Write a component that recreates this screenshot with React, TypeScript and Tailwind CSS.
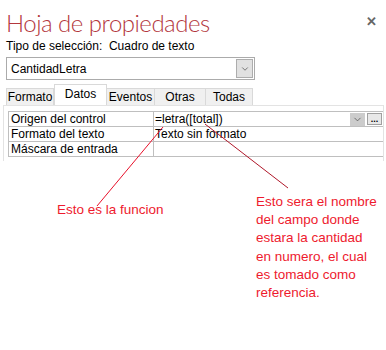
import { ChevronDown } from "lucide-react";

const ui = "font-['Liberation_Sans','Arial',sans-serif]";
const hand = "font-['Liberation_Sans','Arial',sans-serif]";

const tabs = [
  { name: "Formato", w: "w-[48px]" },
  { name: "Datos", w: "w-[53px]" },
  { name: "Eventos", w: "w-[48px]" },
  { name: "Otras", w: "w-[51px]" },
  { name: "Todas", w: "w-[47px]" },
];

function Tabs() {
  return (
    <div className="flex h-[21px] items-end pl-[6px]">
      {tabs.map((t) =>
        t.name === "Datos" ? (
          <div
            key={t.name}
            className={`flex h-[21px] ${t.w} items-start justify-center border-x border-t border-[#d9d9d9] bg-white pt-[2px] text-[12px] leading-[14px]`}
          >
            {t.name}
          </div>
        ) : (
          <div
            key={t.name}
            className={`flex h-[17px] ${t.w} items-center justify-center border-t border-r border-[#d9d9d9] bg-[#f0f0f0] text-[12px] leading-[14px] first:border-l`}
          >
            {t.name}
          </div>
        ),
      )}
    </div>
  );
}

function Row({ label, value, first }: { label: string; value?: string; first?: boolean }) {
  return (
    <div className="flex h-[15px] border-b border-[#bfbfbf]">
      <div className="w-[145px] shrink-0 border-r border-[#bfbfbf] pl-[2px] text-[12px] leading-[14px]">
        {label}
      </div>
      <div className="flex min-w-0 flex-1 items-center pl-[1px] text-[12px] leading-[14px]">
        <span className="flex-1">{value}</span>
        {first && (
          <div className="flex gap-[2px] pr-[1px]">
            <div className="flex h-[13px] w-[15px] items-center justify-center bg-[#cccccc]">
              <ChevronDown className="size-[11px] text-[#444]" strokeWidth={1.5} />
            </div>
            <div className="flex h-[12px] w-[15px] items-center justify-center border border-[#a0a0a0] bg-[#e8e8e8] text-[9px] font-bold leading-[6px]">
              ...
            </div>
          </div>
        )}
      </div>
    </div>
  );
}

export default function App() {
  return (
    <div className={`relative h-[350px] w-[386px] overflow-hidden bg-white text-black ${ui}`}>
      <div className="flex items-start justify-between pl-[6px] pr-[9px] pt-[9px]">
        <h1 className="font-['Lato',sans-serif] text-[24px] font-light leading-[28px] tracking-[-0.5px] text-[#b3373d]">
          Hoja de propiedades
        </h1>
        <span className="mt-[6px] text-[13px] font-bold leading-[14px] text-[#666]">✕</span>
      </div>
      <div className="mt-[1px] pl-[6px] text-[12px] leading-[16px]">
        Tipo de selección:&nbsp; Cuadro de texto
      </div>

      <div className="ml-[6px] mt-[3px] flex h-[23px] w-[249px] items-center border border-[#ababab] bg-white">
        <span className="flex-1 pl-[4px] text-[12px] leading-[16px]">CantidadLetra</span>
        <div className="mr-[1px] flex h-[19px] w-[17px] items-center justify-center border border-[#adadad] bg-[#e1e1e1]">
          <ChevronDown className="size-[10px] text-[#333]" strokeWidth={1.5} />
        </div>
      </div>

      <div className="mt-[4px]">
        <Tabs />
      </div>

      <div className="ml-[3px] mr-[2px] h-[56px] border-x border-t border-[#e3e3e3] pl-[4px] pt-[5px]">
        <div className="border-l border-t border-[#bfbfbf]">
          <Row label="Origen del control" value="=letra([total])" first />
          <Row label="Formato del texto" value="Texto sin formato" />
          <Row label="Máscara de entrada" />
        </div>
      </div>

      <svg className="pointer-events-none absolute left-0 top-0" width="386" height="350">
        <line x1="163" y1="127" x2="97" y2="206" stroke="#e8102a" strokeWidth="1" />
        <line x1="205" y1="124" x2="288" y2="188" stroke="#b0182a" strokeWidth="1" />
      </svg>

      <div className={`absolute left-[57px] top-[201px] whitespace-nowrap text-[13.5px] leading-[18px] text-[#ee1a2e] ${hand}`}>
        Esto es la funcion
      </div>
      <div className={`absolute left-[256px] top-[193px] whitespace-nowrap text-[13.5px] leading-[18.2px] text-[#ee1a2e] ${hand}`}>
        Esto sera el nombre
        <br />
        del campo donde
        <br />
        estara la cantidad
        <br />
        en numero, el cual
        <br />
        es tomado como
        <br />
        referencia.
      </div>
    </div>
  );
}
